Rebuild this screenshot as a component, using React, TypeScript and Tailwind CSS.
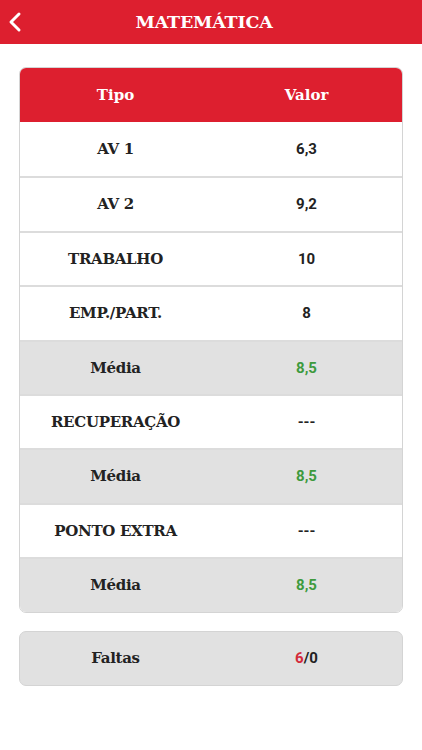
import React from "react";

interface Row {
  label: string;
  value: string;
  media?: boolean;
}

const rows: Row[] = [
  { label: "AV 1", value: "6,3" },
  { label: "AV 2", value: "9,2" },
  { label: "TRABALHO", value: "10" },
  { label: "EMP./PART.", value: "8" },
  { label: "Média", value: "8,5", media: true },
  { label: "RECUPERAÇÃO", value: "---" },
  { label: "Média", value: "8,5", media: true },
  { label: "PONTO EXTRA", value: "---" },
  { label: "Média", value: "8,5", media: true },
];

const slab = "font-['DejaVu_Serif',serif]";
const sans = "font-['Roboto',sans-serif]";

export default function App() {
  return (
    <div className="w-[422px] min-h-[750px] bg-white">
      {/* Top bar */}
      <div className="relative h-[44px] bg-[#dd1f2f] flex items-center justify-center">
        <button className="absolute left-[6px] top-[11px] text-white">
          <svg width="18" height="22" viewBox="0 0 18 22" fill="none">
            <path d="M13 3L5 11l8 8" stroke="white" strokeWidth="3" strokeLinecap="round" strokeLinejoin="round" />
          </svg>
        </button>
        <span className={`${slab} text-white font-bold text-[17.5px] tracking-[-0.2px] mr-[14px]`}>MATEMÁTICA</span>
      </div>

      {/* Notas */}
      <div className="mx-[19px] mt-[23px] rounded-[7px] border border-[#d4d4d4] overflow-hidden">
        <div className="grid grid-cols-2 h-[54px] bg-[#dd1f2f] items-center text-center">
          <span className={`${slab} text-white font-bold text-[15px]`}>Tipo</span>
          <span className={`${slab} text-white font-bold text-[15px]`}>Valor</span>
        </div>
        {rows.map((row, i) => (
          <div
            key={i}
            className={`grid grid-cols-2 h-[54.4px] items-center text-center ${
              i > 0 ? "border-t-2 border-[#dcdcdc]" : ""
            } ${row.media ? "bg-[#e1e1e1]" : "bg-white"}`}
          >
            <span className={`${slab} font-bold text-[15px] tracking-[-0.3px] text-[#222]`}>{row.label}</span>
            <span
              className={`${sans} font-bold text-[15px] ${row.media ? "text-[#3d9a3d]" : "text-[#222]"}`}
            >
              {row.value}
            </span>
          </div>
        ))}
      </div>

      {/* Faltas */}
      <div className="mx-[19px] mt-[18px] h-[55px] rounded-[7px] border border-[#d4d4d4] bg-[#e1e1e1] grid grid-cols-2 items-center text-center">
        <span className={`${slab} font-bold text-[15px] tracking-[-0.3px] text-[#222]`}>Faltas</span>
        <span className={`${sans} font-bold text-[15px] text-[#222]`}>
          <span className="text-[#d42a3a]">6</span>/0
        </span>
      </div>
    </div>
  );
}
